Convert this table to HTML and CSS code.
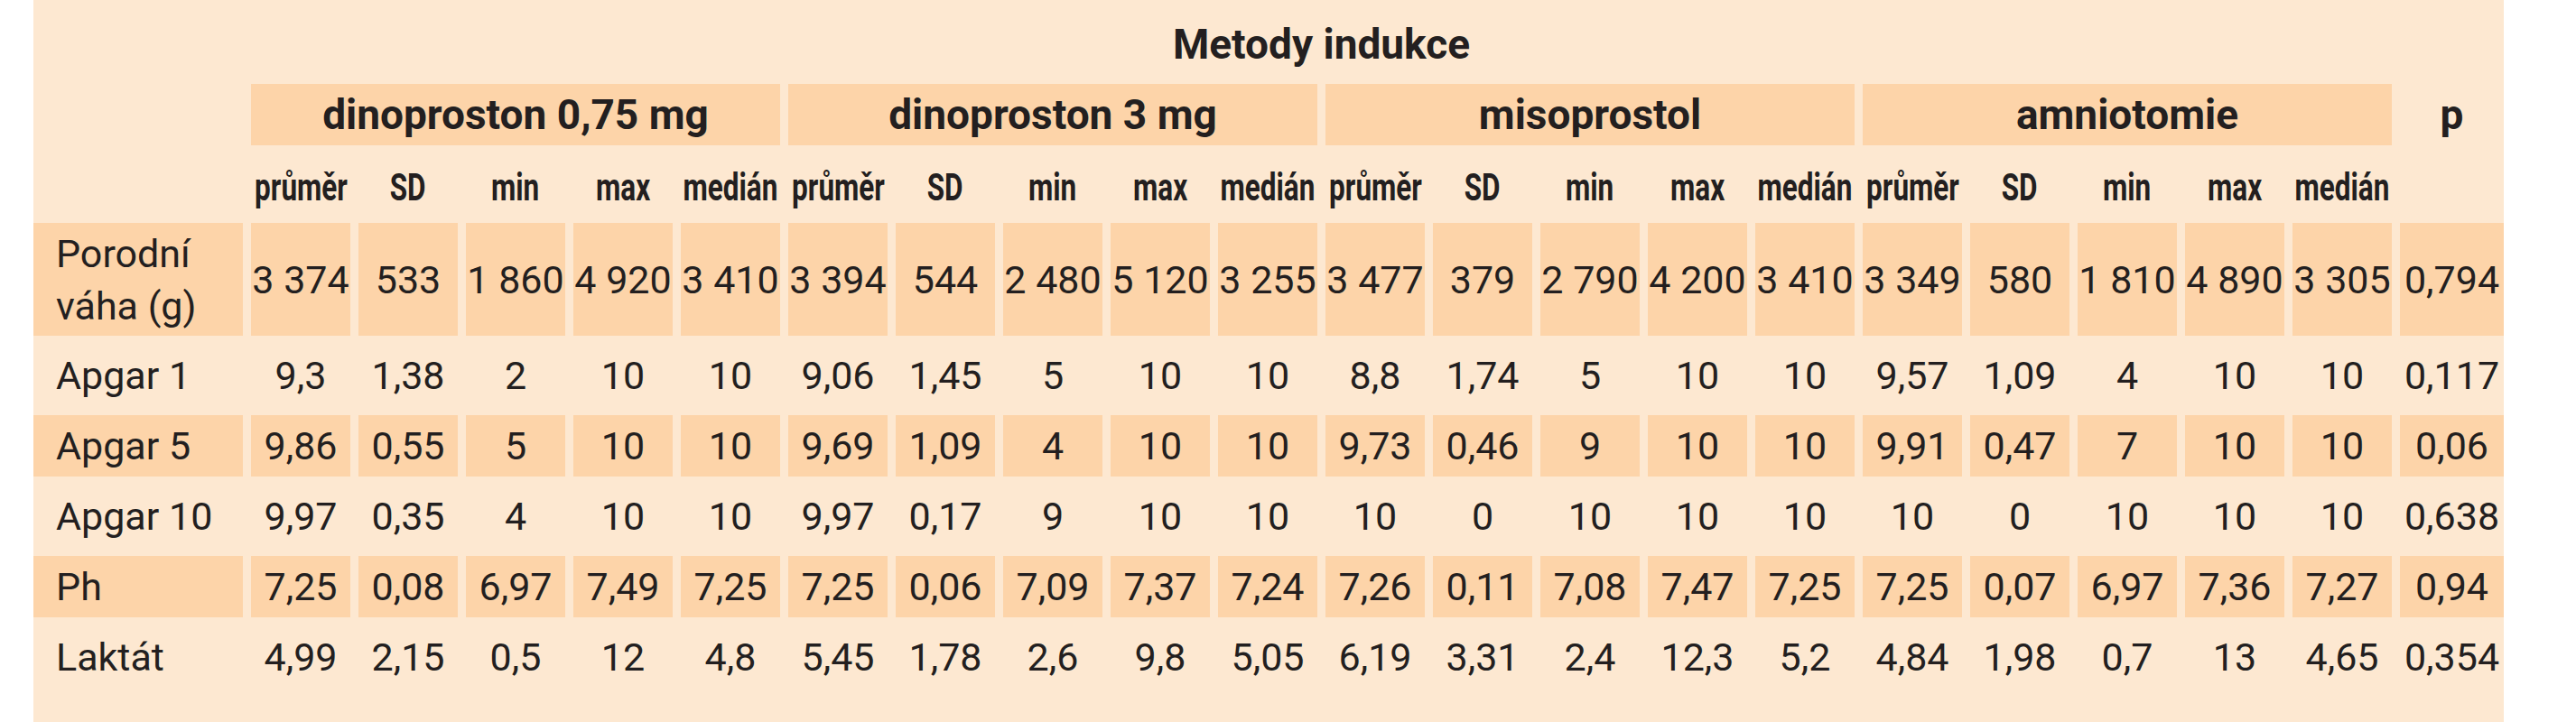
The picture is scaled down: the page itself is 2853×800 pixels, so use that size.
FILE: index.html
```html
<!DOCTYPE html>
<html lang="cs">
<head>
<meta charset="utf-8">
<title>Metody indukce</title>
<link rel="stylesheet" href="styles.css">
</head>
<body>
<div class="panel">
  <div class="grid">
    <div></div>
    <div class="title">Metody indukce</div>
    <div></div>

    <div></div>
    <div class="grp">dinoproston 0,75 mg</div>
    <div class="grp">dinoproston 3 mg</div>
    <div class="grp">misoprostol</div>
    <div class="grp">amniotomie</div>
    <div class="pcol">p</div>

    <div></div>
    <div class="sub"><span>průměr</span></div><div class="sub"><span>SD</span></div><div class="sub"><span>min</span></div><div class="sub"><span>max</span></div><div class="sub"><span>medián</span></div>
    <div class="sub"><span>průměr</span></div><div class="sub"><span>SD</span></div><div class="sub"><span>min</span></div><div class="sub"><span>max</span></div><div class="sub"><span>medián</span></div>
    <div class="sub"><span>průměr</span></div><div class="sub"><span>SD</span></div><div class="sub"><span>min</span></div><div class="sub"><span>max</span></div><div class="sub"><span>medián</span></div>
    <div class="sub"><span>průměr</span></div><div class="sub"><span>SD</span></div><div class="sub"><span>min</span></div><div class="sub"><span>max</span></div><div class="sub"><span>medián</span></div>
    <div></div>

    <div class="lab b">Porodní<br>váha (g)</div>
    <div class="c b">3&nbsp;374</div><div class="c b">533</div><div class="c b">1&nbsp;860</div><div class="c b">4&nbsp;920</div><div class="c b">3&nbsp;410</div>
    <div class="c b">3&nbsp;394</div><div class="c b">544</div><div class="c b">2&nbsp;480</div><div class="c b">5&nbsp;120</div><div class="c b">3&nbsp;255</div>
    <div class="c b">3&nbsp;477</div><div class="c b">379</div><div class="c b">2&nbsp;790</div><div class="c b">4&nbsp;200</div><div class="c b">3&nbsp;410</div>
    <div class="c b">3&nbsp;349</div><div class="c b">580</div><div class="c b">1&nbsp;810</div><div class="c b">4&nbsp;890</div><div class="c b">3&nbsp;305</div>
    <div class="c b">0,794</div>

    <div class="lab">Apgar 1</div>
    <div class="c">9,3</div><div class="c">1,38</div><div class="c">2</div><div class="c">10</div><div class="c">10</div>
    <div class="c">9,06</div><div class="c">1,45</div><div class="c">5</div><div class="c">10</div><div class="c">10</div>
    <div class="c">8,8</div><div class="c">1,74</div><div class="c">5</div><div class="c">10</div><div class="c">10</div>
    <div class="c">9,57</div><div class="c">1,09</div><div class="c">4</div><div class="c">10</div><div class="c">10</div>
    <div class="c">0,117</div>

    <div class="lab b">Apgar 5</div>
    <div class="c b">9,86</div><div class="c b">0,55</div><div class="c b">5</div><div class="c b">10</div><div class="c b">10</div>
    <div class="c b">9,69</div><div class="c b">1,09</div><div class="c b">4</div><div class="c b">10</div><div class="c b">10</div>
    <div class="c b">9,73</div><div class="c b">0,46</div><div class="c b">9</div><div class="c b">10</div><div class="c b">10</div>
    <div class="c b">9,91</div><div class="c b">0,47</div><div class="c b">7</div><div class="c b">10</div><div class="c b">10</div>
    <div class="c b">0,06</div>

    <div class="lab">Apgar 10</div>
    <div class="c">9,97</div><div class="c">0,35</div><div class="c">4</div><div class="c">10</div><div class="c">10</div>
    <div class="c">9,97</div><div class="c">0,17</div><div class="c">9</div><div class="c">10</div><div class="c">10</div>
    <div class="c">10</div><div class="c">0</div><div class="c">10</div><div class="c">10</div><div class="c">10</div>
    <div class="c">10</div><div class="c">0</div><div class="c">10</div><div class="c">10</div><div class="c">10</div>
    <div class="c">0,638</div>

    <div class="lab b">Ph</div>
    <div class="c b">7,25</div><div class="c b">0,08</div><div class="c b">6,97</div><div class="c b">7,49</div><div class="c b">7,25</div>
    <div class="c b">7,25</div><div class="c b">0,06</div><div class="c b">7,09</div><div class="c b">7,37</div><div class="c b">7,24</div>
    <div class="c b">7,26</div><div class="c b">0,11</div><div class="c b">7,08</div><div class="c b">7,47</div><div class="c b">7,25</div>
    <div class="c b">7,25</div><div class="c b">0,07</div><div class="c b">6,97</div><div class="c b">7,36</div><div class="c b">7,27</div>
    <div class="c b">0,94</div>

    <div class="lab">Laktát</div>
    <div class="c">4,99</div><div class="c">2,15</div><div class="c">0,5</div><div class="c">12</div><div class="c">4,8</div>
    <div class="c">5,45</div><div class="c">1,78</div><div class="c">2,6</div><div class="c">9,8</div><div class="c">5,05</div>
    <div class="c">6,19</div><div class="c">3,31</div><div class="c">2,4</div><div class="c">12,3</div><div class="c">5,2</div>
    <div class="c">4,84</div><div class="c">1,98</div><div class="c">0,7</div><div class="c">13</div><div class="c">4,65</div>
    <div class="c">0,354</div>
  </div>
</div>
</body>
</html>
```
FILE: styles.css
```css
html, body {
  margin: 0;
  padding: 0;
  background: #ffffff;
}

body {
  font-family: Roboto, "Liberation Sans", sans-serif;
  color: #231f20;
}

.panel {
  margin-left: 37px;
  width: 2736px;
  min-height: 800px;
  background: #fde8d1;
  box-sizing: border-box;
}

.grid {
  display: grid;
  grid-template-columns: 232px repeat(20, 110px) 115px;
  grid-template-rows: 83px 68px 66px 125px 68px 68px 68px 68px 68px;
  column-gap: 9px;
  row-gap: 10px;
}

.title {
  grid-column: 2 / span 20;
  display: flex;
  align-items: flex-end;
  justify-content: center;
  font-weight: 700;
  font-size: 46px;
  line-height: 54px;
  padding-bottom: 7px;
}

.grp {
  grid-column: span 5;
  background: #fdd4a9;
  display: flex;
  align-items: center;
  justify-content: center;
  font-weight: 700;
  font-size: 46px;
}

.pcol {
  display: flex;
  align-items: center;
  justify-content: center;
  font-weight: 700;
  font-size: 46px;
}

.sub {
  display: flex;
  align-items: center;
  justify-content: center;
  padding-top: 6px;
  font-weight: 700;
  font-size: 42px;
  white-space: nowrap;
}

.sub span {
  display: inline-block;
  transform: scaleX(0.75);
}

.lab {
  display: flex;
  align-items: center;
  padding-left: 25px;
  font-size: 43px;
  line-height: 58px;
  white-space: nowrap;
}

.c {
  display: flex;
  align-items: center;
  justify-content: center;
  font-size: 43px;
  white-space: nowrap;
}

.b {
  background: #fdd4a9;
}
```
